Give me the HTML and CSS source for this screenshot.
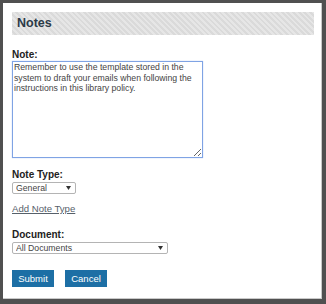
FILE: index.html
```html
<!DOCTYPE html>
<html lang="en">
<head>
    <meta charset="UTF-8">
    <meta name="viewport" content="width=device-width, initial-scale=1.0">
    <title>Notes</title>
    <link rel="stylesheet" href="styles.css">
</head>
<body>
    <div class="dialog">
        <div class="dialog-header">
            <h2>Notes</h2>
        </div>

        <form class="note-form">
            <label class="field-label" for="note">Note:</label>
            <textarea id="note" class="note-text">Remember to use the template stored in the system to draft your emails when following the instructions in this library policy.</textarea>

            <label class="field-label type-label" for="note-type">Note Type:</label>
            <div class="select-wrap type-select">
                <select id="note-type">
                    <option>General</option>
                </select>
                <svg class="arrow" width="5" height="4" viewBox="0 0 5 4"><path d="M0 0h5L2.5 4z" fill="#333"/></svg>
            </div>

            <a href="#" class="add-link">Add Note Type</a>

            <label class="field-label doc-label" for="document">Document:</label>
            <div class="select-wrap doc-select">
                <select id="document">
                    <option>All Documents</option>
                </select>
                <svg class="arrow" width="5" height="4" viewBox="0 0 5 4"><path d="M0 0h5L2.5 4z" fill="#333"/></svg>
            </div>

            <div class="actions">
                <button type="button">Submit</button>
                <button type="button">Cancel</button>
            </div>
        </form>
    </div>
</body>
</html>
```

FILE: styles.css
```css
/* Page frame */
body {
    margin: 0;
    padding: 0;
    font-family: "Liberation Sans", Arial, sans-serif;
    background-color: #505050;
}

.dialog {
    box-sizing: border-box;
    margin: 3px 4px 5px 3px;
    height: 296px;
    padding: 9px 7px 0 9px;
    background-color: #ffffff;
    border-right: 1px solid #c9c9c9;
    border-bottom: 1px solid #c9c9c9;
}

/* Striped title bar */
.dialog-header {
    height: 23px;
    padding-left: 5px;
    background: repeating-linear-gradient(45deg, #e6e6e6 0, #e6e6e6 2px, #dadada 2px, #dadada 4px);
}

.dialog-header h2 {
    margin: 0;
    font-size: 12.5px;
    line-height: 23px;
    font-weight: bold;
    color: #2c3a48;
}

/* Form */
.note-form {
    display: flex;
    flex-direction: column;
    align-items: flex-start;
    padding-top: 14px;
}

.field-label {
    font-size: 10px;
    line-height: 12px;
    font-weight: bold;
    color: #222;
}

.note-text {
    box-sizing: border-box;
    width: 191px;
    height: 97px;
    margin: 0;
    padding: 0 1px;
    border: 1px solid #7fa3e4;
    box-shadow: 0 0 1px #a9c4f0;
    font-family: "Liberation Sans", Arial, sans-serif;
    font-size: 8.7px;
    line-height: 10.5px;
    color: #444;
    outline: none;
}

.type-label {
    margin-top: 11px;
}

.doc-label {
    margin-top: 14px;
}

.select-wrap {
    position: relative;
    margin-top: 1px;
}

.select-wrap select {
    display: block;
    box-sizing: border-box;
    height: 12px;
    margin: 0;
    padding: 0 0 0 3px;
    appearance: none;
    -webkit-appearance: none;
    background-color: #fff;
    border: 1px solid #b4b4b4;
    border-radius: 2px;
    font-family: "Liberation Sans", Arial, sans-serif;
    font-size: 8.7px;
    line-height: 10px;
    color: #444;
}

.type-select select {
    width: 64px;
}

.doc-select select {
    width: 156px;
}

.select-wrap .arrow {
    position: absolute;
    top: 4px;
    right: 5px;
}

.add-link {
    margin-top: 9px;
    font-size: 9.6px;
    line-height: 12px;
    color: #56606a;
    text-decoration: underline;
}

/* Buttons */
.actions {
    display: flex;
    gap: 11px;
    margin-top: 16px;
}

.actions button {
    box-sizing: border-box;
    width: 42px;
    height: 17px;
    padding: 0;
    background-color: #1d6fa5;
    color: #ffffff;
    border: none;
    font-family: "Liberation Sans", Arial, sans-serif;
    font-size: 9.5px;
    cursor: pointer;
}
```
